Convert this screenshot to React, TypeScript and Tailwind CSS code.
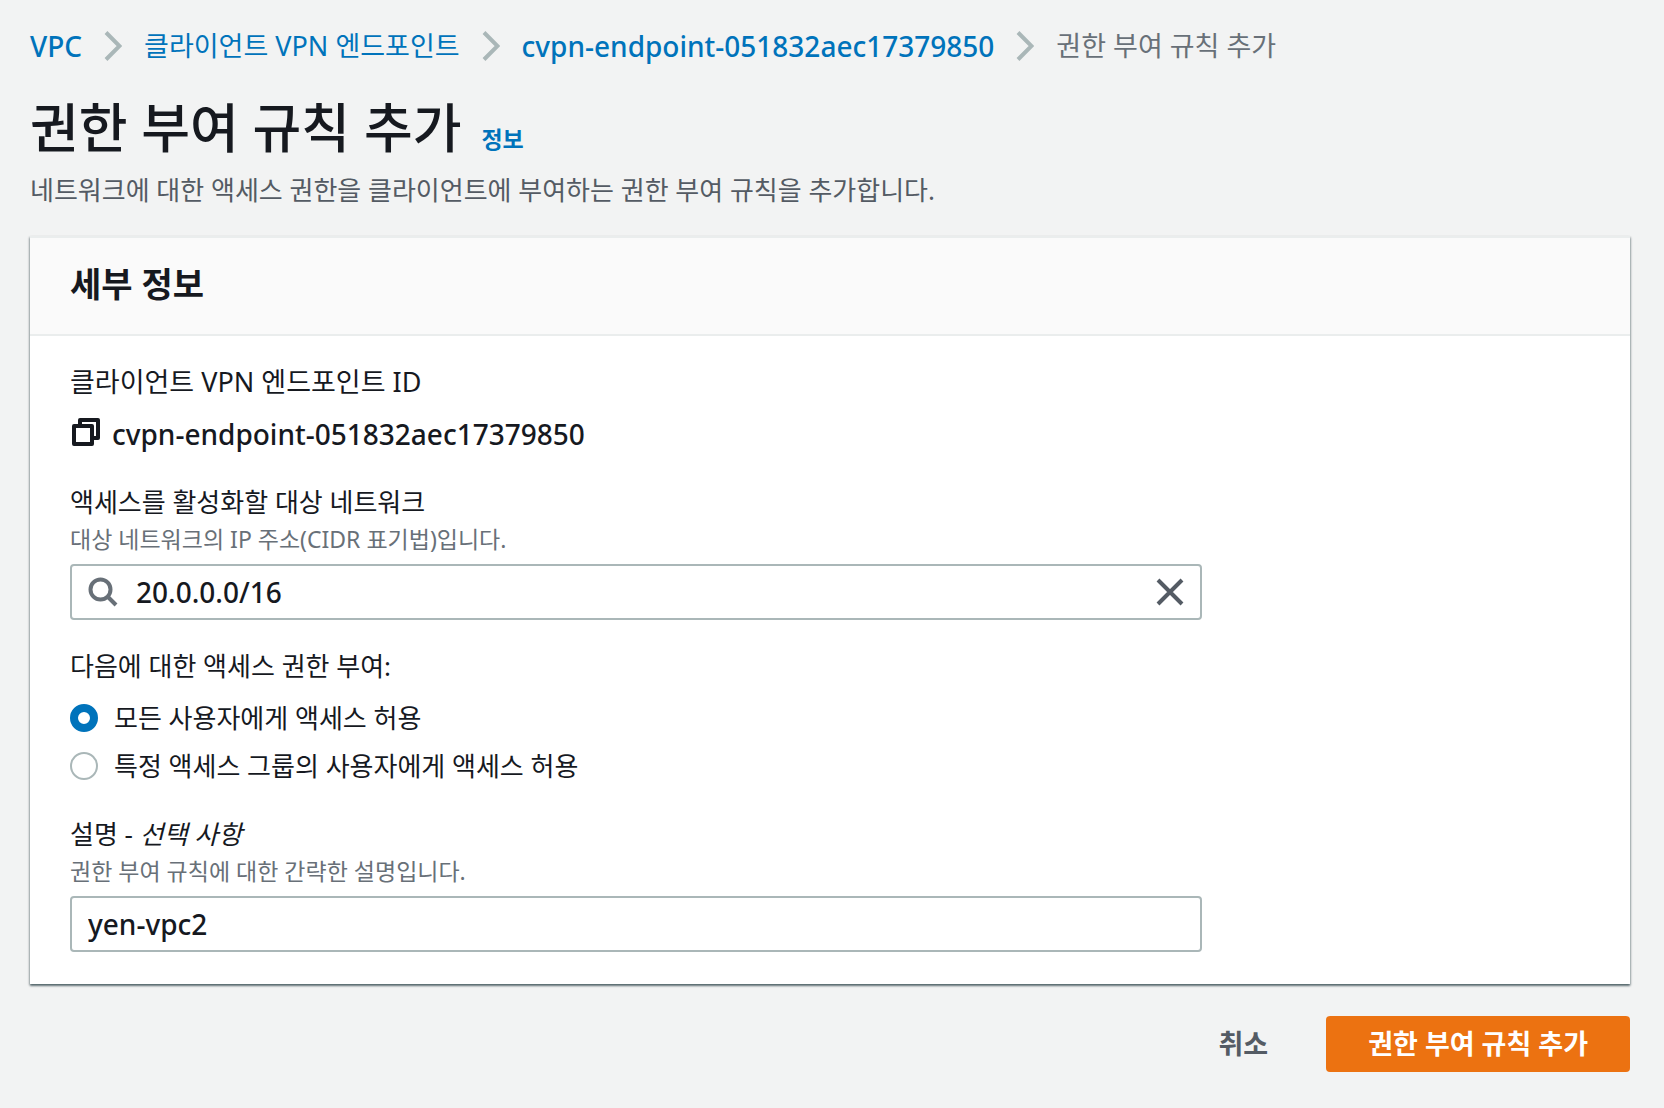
import { FC, ReactNode, useState } from "react";

const ENDPOINT_ID = "cvpn-endpoint-051832aec17379850";

const Chevron: FC = () => (
  <svg className="mx-[22px] h-[30px] w-[18px] shrink-0" viewBox="0 0 18 30" fill="none" stroke="#aab7b8" strokeWidth="4" aria-hidden="true">
    <path d="M2 1.5 L15.5 15 L2 28.5" />
  </svg>
);

const CopyIcon: FC = () => (
  <svg className="h-7 w-[30px]" viewBox="0 0 30 28" fill="none" stroke="currentColor" strokeWidth="4" strokeLinejoin="round" aria-hidden="true">
    <path d="M4 8h18v18H4z" />
    <path d="M10 8V2h18v18h-6" />
  </svg>
);

const SearchIcon: FC = () => (
  <svg className="size-[30px] shrink-0" viewBox="0 0 30 30" fill="none" stroke="#687078" strokeWidth="4" aria-hidden="true">
    <circle cx="12.5" cy="12.5" r="10" />
    <path d="M19.5 19.5l8.5 8.5" />
  </svg>
);

const CloseIcon: FC = () => (
  <svg className="size-7" viewBox="0 0 28 28" fill="none" stroke="#545b64" strokeWidth="4" aria-hidden="true">
    <path d="M2 2l24 24M26 2L2 26" />
  </svg>
);

interface RadioProps {
  id: string;
  checked: boolean;
  onSelect: () => void;
  children: ReactNode;
}

const RadioOption: FC<RadioProps> = ({ id, checked, onSelect, children }) => (
  <div className="flex items-center gap-4 leading-[44px]">
    <input
      type="radio"
      id={id}
      name="grant-access"
      checked={checked}
      onChange={onSelect}
      className="size-7 shrink-0 appearance-none rounded-full border-2 border-[#aab7b8] bg-white checked:border-8 checked:border-[#0073bb]"
    />
    <label htmlFor={id}>{children}</label>
  </div>
);

const App: FC = () => {
  const [network, setNetwork] = useState("20.0.0.0/16");
  const [description, setDescription] = useState("yen-vpc2");
  const [access, setAccess] = useState("all");

  return (
    <div className="min-h-screen bg-[#f2f3f3] pt-6 pr-[34px] pb-9 pl-[30px] font-['Noto_Sans','Noto_Sans_CJK_KR',sans-serif] text-[26px] text-[#16191f]">
      <nav aria-label="breadcrumb">
        <ol className="flex items-center text-[27px] leading-[44px] text-[#0073bb]">
          <li className="text-[28px] font-medium"><a href="#vpc">VPC</a></li>
          <Chevron />
          <li><a href="#endpoints">클라이언트 VPN 엔드포인트</a></li>
          <Chevron />
          <li className="text-[28px] font-medium"><a href="#endpoint">{ENDPOINT_ID}</a></li>
          <Chevron />
          <li className="text-[#687078]">권한 부여 규칙 추가</li>
        </ol>
      </nav>

      <header className="mt-6">
        <div className="flex items-baseline gap-5">
          <h1 className="text-[53px] leading-[72px] font-medium">권한 부여 규칙 추가</h1>
          <a href="#info" className="text-[23px] font-bold text-[#0073bb]">정보</a>
        </div>
        <p className="mt-1 leading-[44px] text-[#545b64]">
          네트워크에 대한 액세스 권한을 클라이언트에 부여하는 권한 부여 규칙을 추가합니다.
        </p>
      </header>

      <form onSubmit={(event) => event.preventDefault()}>
        <section className="mt-6 border-t-2 border-[#eaeded] bg-white shadow-[0_2px_2px_0_rgba(0,28,36,0.5),1px_1px_2px_0_rgba(0,28,36,0.2),-1px_1px_2px_0_rgba(0,28,36,0.2)]">
          <div className="border-b-2 border-[#eaeded] bg-[#fafafa] px-10 pt-6 pb-7">
            <h2 className="text-[34px] leading-[44px] font-bold">세부 정보</h2>
          </div>

          <div className="flex flex-col gap-6 px-10 pt-6 pb-8">
            <div>
              <div className="text-[27px] leading-[44px]">클라이언트 VPN 엔드포인트 ID</div>
              <div className="mt-2 flex items-center gap-3 text-[28px] leading-[44px] font-medium">
                <button type="button" aria-label="복사" className="pb-1"><CopyIcon /></button>
                <span>{ENDPOINT_ID}</span>
              </div>
            </div>

            <div className="w-[calc(75%-8px)]">
              <label htmlFor="network" className="block leading-[44px]">액세스를 활성화할 대상 네트워크</label>
              <p id="network-hint" className="text-[23px] leading-[30px] text-[#687078]">대상 네트워크의 IP 주소(CIDR 표기법)입니다.</p>
              <div className="mt-2.5 flex h-14 items-center rounded-sm border-2 border-[#aab7b8] bg-white px-4">
                <SearchIcon />
                <input
                  id="network"
                  aria-describedby="network-hint"
                  className="ml-[18px] min-w-0 flex-1 text-[28px] leading-[44px] font-medium outline-none"
                  value={network}
                  onChange={(event) => setNetwork(event.target.value)}
                />
                <button type="button" aria-label="지우기" onClick={() => setNetwork("")}><CloseIcon /></button>
              </div>
            </div>

            <fieldset>
              <legend className="leading-[44px]">다음에 대한 액세스 권한 부여:</legend>
              <div className="mt-2 flex flex-col gap-1">
                <RadioOption id="access-all" checked={access === "all"} onSelect={() => setAccess("all")}>
                  모든 사용자에게 액세스 허용
                </RadioOption>
                <RadioOption id="access-group" checked={access === "group"} onSelect={() => setAccess("group")}>
                  특정 액세스 그룹의 사용자에게 액세스 허용
                </RadioOption>
              </div>
            </fieldset>

            <div className="w-[calc(75%-8px)]">
              <label htmlFor="description" className="block leading-[44px]">설명 - <i>선택 사항</i></label>
              <p id="description-hint" className="text-[23px] leading-[30px] text-[#687078]">권한 부여 규칙에 대한 간략한 설명입니다.</p>
              <input
                id="description"
                aria-describedby="description-hint"
                className="mt-2.5 block h-14 w-full rounded-sm border-2 border-[#aab7b8] bg-white px-4 text-[28px] font-medium outline-none"
                value={description}
                onChange={(event) => setDescription(event.target.value)}
              />
            </div>
          </div>
        </section>

        <div className="mt-8 flex justify-end gap-4 text-[27px] font-bold">
          <button type="button" className="h-14 px-[42px] text-[#545b64]">취소</button>
          <button type="submit" className="h-14 rounded-sm bg-[#ec7211] px-[42px] text-white">권한 부여 규칙 추가</button>
        </div>
      </form>
    </div>
  );
};

export default App;
